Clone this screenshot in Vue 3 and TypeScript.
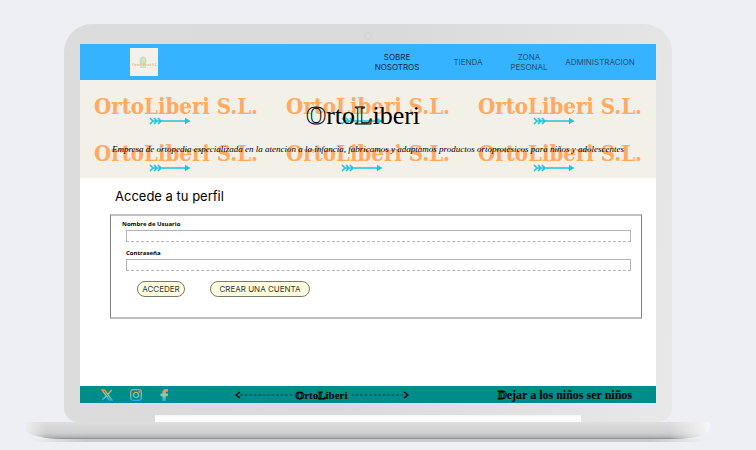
<script setup lang="ts">
import { ref } from 'vue'

interface NavLink {
  label: string
  href: string
  active?: boolean
}

const links: NavLink[] = [
  { label: 'SOBRE NOSOTROS', href: '#nosotros', active: true },
  { label: 'TIENDA', href: '#tienda' },
  { label: 'ZONA PESONAL', href: '#zona' },
  { label: 'ADMINISTRACION', href: '#admin' },
]

const tiles = 6
const user = ref('')
const password = ref('')
</script>

<template>
  <div class="page">
    <div class="lid">
      <span class="camera"></span>
      <div class="screen">
        <header class="topbar">
          <a class="logo" href="#inicio" aria-label="OrtoLiberi">
            <svg viewBox="0 0 28 28" width="28" height="28" aria-hidden="true">
              <rect width="28" height="28" fill="#f4f1ea" />
              <ellipse cx="13" cy="13" rx="3.5" ry="4.5" fill="#bfe3c8" />
              <circle cx="13.500" cy="12" r="1.500" fill="#f1e49a" />
              <rect x="10" y="18.500" width="6" height="1" fill="#8fdce0" />
              <text x="2" y="18" font-size="4" font-weight="700" fill="#f9b27a" font-family="Liberation Serif, serif">OrtoLiberi S.L.</text>
            </svg>
          </a>
          <nav class="nav">
            <a v-for="l in links" :key="l.label" :href="l.href" :class="{ active: l.active }">{{ l.label }}</a>
          </nav>
        </header>

        <section class="banner">
          <div class="pattern" aria-hidden="true">
            <div v-for="n in tiles" :key="n" class="tile">
              <span>OrtoLiberi S.L.</span>
              <svg viewBox="0 0 42 8" width="42" height="8">
                <g fill="none" stroke="#1fc4e0" stroke-width="1.600">
                  <path d="M1 1l3 3-3 3M5 1l3 3-3 3M9 1l3 3-3 3M3 4h34" />
                </g>
                <path d="M36 0.800l5.500 3.200-5.500 3.200z" fill="#1fc4e0" />
              </svg>
            </div>
          </div>
          <div class="intro">
            <h1><span class="hollow">O</span>rto<span class="hollow">L</span>iberi</h1>
            <p>Empresa de ortopedia especializada en la atencion a la infancia, fabricamos y adaptamos productos ortoprotesicos para niños y adolescentes</p>
          </div>
        </section>

        <main class="content">
          <h2>Accede a tu perfil</h2>
          <form class="login" @submit.prevent>
            <label for="user">Nombre de Usuario</label>
            <input id="user" v-model="user" type="text" />
            <label for="password" class="inset">Contraseña</label>
            <input id="password" v-model="password" type="password" />
            <div class="actions">
              <button type="submit" class="enter">ACCEDER</button>
              <button type="button" class="create">CREAR UNA CUENTA</button>
            </div>
          </form>
        </main>

        <footer class="footer">
          <svg class="defs" width="0" height="0" aria-hidden="true">
            <defs>
              <linearGradient id="social" x1="0" y1="0" x2="0" y2="12" gradientUnits="userSpaceOnUse">
                <stop offset="0.100" stop-color="#ff8a42" />
                <stop offset="0.500" stop-color="#8fcfa8" />
                <stop offset="1" stop-color="#22a5f5" />
              </linearGradient>
            </defs>
          </svg>
          <div class="social">
            <a href="#x" aria-label="X">
              <svg viewBox="0 0 12 12" width="12" height="12">
                <path d="M1 1h2.600l7.400 10H8.400zM10.800 1L6.800 5.500M5 7.200L1.300 11" fill="none" stroke="url(#social)" stroke-width="1.300" />
              </svg>
            </a>
            <a href="#instagram" aria-label="Instagram">
              <svg viewBox="0 0 12 12" width="12" height="12">
                <g fill="none" stroke="url(#social)" stroke-width="1.200">
                  <rect x="0.700" y="0.700" width="10.600" height="10.600" rx="2.500" />
                  <circle cx="6" cy="6" r="2.600" />
                </g>
                <circle cx="9.200" cy="2.900" r="0.800" fill="url(#social)" />
              </svg>
            </a>
            <a href="#facebook" aria-label="Facebook">
              <svg viewBox="0 0 12 12" width="12" height="12">
                <path d="M3.400 12V7.300H1.500V4.500h1.900V3.300C3.400 1.200 4.700 0 7 0H9v2.800H7.900C7.100 2.800 6.800 3.100 6.800 3.700v.8h2.300L8.800 7.300h-2V12z" fill="url(#social)" />
              </svg>
            </a>
          </div>
          <div class="brand">
            <svg viewBox="0 0 58 8" width="58" height="8" aria-hidden="true">
              <path d="M5 1L1 4l4 3" fill="none" stroke="#000" stroke-width="1.200" />
              <path d="M5 4h53" stroke="#063c3c" stroke-width="0.800" stroke-dasharray="3 1.500" />
            </svg>
            <span><span class="hollow">O</span>rto<span class="hollow">L</span>iberi</span>
            <svg viewBox="0 0 58 8" width="58" height="8" aria-hidden="true">
              <path d="M53 1l4 3-4 3" fill="none" stroke="#000" stroke-width="1.200" />
              <path d="M0 4h54" stroke="#063c3c" stroke-width="0.800" stroke-dasharray="3 1.500" />
            </svg>
          </div>
          <p class="motto"><span class="hollow">D</span>ejar a los niños ser niños</p>
        </footer>
      </div>
      <span class="hinge"></span>
    </div>
    <div class="base"></div>
    <div class="ground"></div>
  </div>
</template>

<style>
body {
  background: #eeeff4;
}
</style>

<style scoped>
.page {
  padding: 24px 46px 8px 26px;
  font-family: Inter, "Liberation Sans", sans-serif;
  color: #000;
}

h1,
h2,
p {
  margin: 0;
}

a {
  color: inherit;
  text-decoration: none;
}

.lid {
  display: flex;
  flex-direction: column;
  margin: 0 38px;
  padding: 0 16px;
  border-radius: 28px 28px 14px 14px;
  background: linear-gradient(100deg, #dcdcdc, #dadada 50%, #e8e8e8);
}

.camera {
  align-self: center;
  box-sizing: border-box;
  width: 8px;
  height: 8px;
  margin: 8px 0 4px;
  border: 1px solid #d2d2d2;
  border-radius: 50%;
}

.screen {
  background: #fff;
}

.topbar {
  display: flex;
  align-items: center;
  justify-content: space-between;
  height: 36px;
  padding: 0 14px 0 50px;
  background: #36b3ff;
}

.logo svg {
  display: block;
}

.nav {
  display: grid;
  grid-template-columns: 78px 64px 58px 84px;
  align-items: center;
  justify-items: center;
  font-size: 8px;
  line-height: 10px;
  text-align: center;
  color: #24506e;
}

.nav a {
  padding: 0 10px;
}

.nav a:last-child {
  padding: 0;
}

.nav .active {
  color: #0c2a44;
}

.banner {
  display: grid;
  height: 98px;
  background: #f3f0e8;
}

.pattern,
.intro {
  grid-area: 1 / 1;
}

.pattern {
  display: grid;
  grid-template-columns: repeat(3, 1fr);
  grid-auto-rows: 47px;
  padding-top: 4px;
}

.tile {
  display: flex;
  flex-direction: column;
  align-items: center;
  padding-top: 11px;
  font: 700 22px/22px "DejaVu Serif Condensed", "DejaVu Serif", serif;
  white-space: nowrap;
  color: #ffa963;
}

.tile svg {
  margin-right: 12px;
}

.intro {
  z-index: 1;
  display: flex;
  flex-direction: column;
  align-items: center;
  padding-top: 21px;
  text-align: center;
}

.intro h1 {
  padding-right: 10px;
  font: 400 26px/30px "Liberation Serif", serif;
}

.hollow {
  font-weight: 700;
  color: transparent;
  -webkit-text-stroke: 1px #000;
}

.intro p {
  margin-top: 10px;
  font: italic 400 9px/16px "Liberation Serif", serif;
  white-space: nowrap;
}

.content {
  height: 208px;
  box-sizing: border-box;
  padding: 9px 14px 0 30px;
}

.content h2 {
  padding-left: 5px;
  font: 400 13px/18px Inter, "Open Sans", sans-serif;
}

.login {
  display: flex;
  flex-direction: column;
  margin-top: 9px;
  padding: 2px 10px 20px 11px;
  border: 1px solid #808080;
  border-top: 2px solid #c0c0c0;
  border-bottom: 2px solid #c0c0c0;
}

.login label {
  font: 700 6px/12px "Open Sans", "Noto Sans", sans-serif;
}

.login .inset {
  margin-top: 5px;
  padding-left: 4px;
}

.login input {
  box-sizing: border-box;
  height: 12px;
  margin-left: 4px;
  padding: 0 4px;
  border: 1px solid #b4b4b4;
  border-bottom-style: dashed;
  font-size: 8px;
  outline: none;
}

.actions {
  display: flex;
  gap: 25px;
  margin: 10px 0 0 15px;
}

.actions button {
  height: 16px;
  padding: 0;
  border: 1px solid #77776a;
  border-radius: 8px;
  background: #ffffe0;
  font: 400 8px/14px Inter, "Liberation Sans", sans-serif;
  color: #333;
}

.enter {
  width: 48px;
}

.create {
  width: 100px;
}

.footer {
  display: flex;
  align-items: center;
  justify-content: space-between;
  height: 17px;
  padding: 0 24px 0 21px;
  background: #008c8a;
  font: 700 11px/16px "Liberation Serif", serif;
}

.defs {
  position: absolute;
}

.social,
.brand {
  display: flex;
  align-items: center;
}

.social {
  gap: 17px;
}

.social svg {
  display: block;
}

.brand {
  gap: 3px;
  margin-right: 26px;
}

.motto {
  font: 700 12px/16px "Liberation Serif", serif;
}

.hinge {
  align-self: center;
  width: 74%;
  height: 7px;
  margin-top: 12px;
  background: linear-gradient(#f4f4f4, #fff 40%, #f8f8f8);
}

.base {
  height: 17px;
  border-radius: 0 0 36px 36px / 0 0 10px 10px;
  background:
    linear-gradient(90deg, #ececec, transparent 3%, transparent 94%, #f6f6f6),
    linear-gradient(#dedede, #cfcfcf 65%, #b4b4b4 90%, #858585);
}

.ground {
  height: 3px;
  margin: 0 6px;
  background: linear-gradient(90deg, transparent, #c8c9ce 8%, #c8c9ce 92%, transparent);
}
</style>
